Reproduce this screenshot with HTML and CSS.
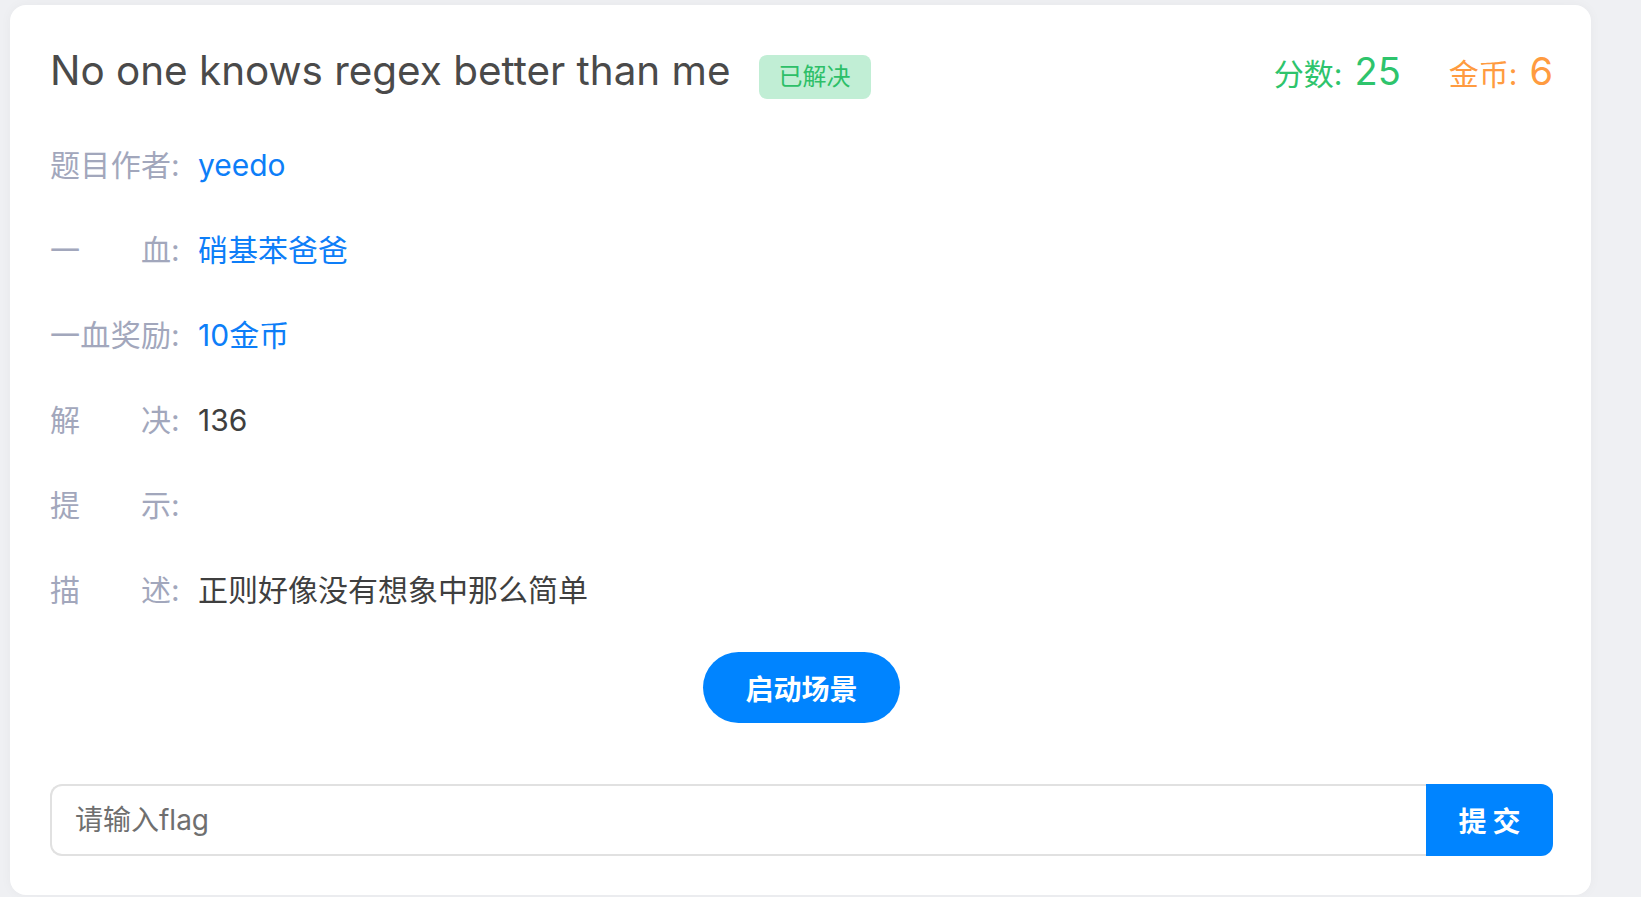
FILE: index.html
```html
<!DOCTYPE html>
<html lang="zh-CN">
<head>
<meta charset="utf-8">
<title>No one knows regex better than me</title>
<link rel="stylesheet" href="styles.css">
</head>
<body>
<div class="page">
  <div class="card">
    <div class="header">
      <div class="title-group">
        <h1 class="title">No one knows regex better than me</h1>
        <span class="badge">已解决</span>
      </div>
      <div class="stats">
        <span class="stat stat-score"><span class="stat-label">分数:</span><span class="stat-num">25</span></span>
        <span class="stat stat-coin"><span class="stat-label">金币:</span><span class="stat-num">6</span></span>
      </div>
    </div>

    <div class="rows">
      <div class="row"><span class="label"><span class="label-text">题目作者</span>:</span><span class="value link">yeedo</span></div>
      <div class="row"><span class="label"><span class="label-text">一血</span>:</span><span class="value link">硝基苯爸爸</span></div>
      <div class="row"><span class="label"><span class="label-text">一血奖励</span>:</span><span class="value link">10金币</span></div>
      <div class="row"><span class="label"><span class="label-text">解决</span>:</span><span class="value">136</span></div>
      <div class="row"><span class="label"><span class="label-text">提示</span>:</span><span class="value"></span></div>
      <div class="row"><span class="label"><span class="label-text">描述</span>:</span><span class="value">正则好像没有想象中那么简单</span></div>
    </div>

    <div class="launch-wrap">
      <button class="launch">启动场景</button>
    </div>

    <div class="submit-group">
      <input class="flag-input" type="text" placeholder="请输入flag">
      <button class="submit">提交</button>
    </div>
  </div>
</div>
</body>
</html>
```

FILE: styles.css
```css
html, body {
  margin: 0;
  padding: 0;
}
body {
  background: #eff0f3;
  font-family: Inter, "Noto Sans CJK SC", sans-serif;
  width: 1641px;
  height: 897px;
  overflow: hidden;
}
.page {
  padding: 5px 0 0 10px;
}
.card {
  box-sizing: border-box;
  width: 1581px;
  height: 890px;
  background: #ffffff;
  border-radius: 16px;
  box-shadow: 0 0 12px rgba(0, 0, 0, 0.04);
  padding: 40px 38px 38px 40px;
  display: flex;
  flex-direction: column;
}
.header {
  display: flex;
  justify-content: space-between;
  align-items: baseline;
  height: 52px;
}
.title-group {
  display: flex;
  align-items: baseline;
}
.title {
  margin: 0;
  font-size: 40.4px;
  line-height: 52px;
  font-weight: 400;
  color: #4a4a4a;
}
.badge {
  margin-left: 28px;
  background: #c1eed5;
  color: #2dbf68;
  font-size: 24px;
  line-height: 40px;
  height: 40px;
  padding: 0 20px 4px 20px;
  border-radius: 8px;
  font-family: "Noto Sans CJK SC", sans-serif;
}
.stats {
  display: flex;
  align-items: baseline;
  gap: 48px;
}
.stat {
  white-space: nowrap;
  display: flex;
  align-items: baseline;
}
.stat-label {
  font-size: 30px;
}
.stat-num {
  font-size: 38px;
  margin-left: 12px;
}
.stat-score {
  color: #2ec46c;
}
.stat-coin {
  color: #ff9b40;
}
.rows {
  margin-top: 48px;
  display: flex;
  flex-direction: column;
  gap: 45px;
}
.row {
  display: flex;
  align-items: center;
  height: 40px;
  font-size: 30px;
  line-height: 40px;
  white-space: nowrap;
}
.label {
  display: flex;
  color: #a2a7bc;
  width: 148px;
  flex: none;
}
.label-text {
  display: inline-block;
  width: 121px;
  text-align: justify;
  text-align-last: justify;
}
.value {
  color: #3f3f3f;
}
.link {
  color: #0d7ef8;
}
.launch-wrap {
  margin-top: 42px;
  display: flex;
  justify-content: center;
}
.launch {
  height: 71px;
  padding: 0 42px;
  border: none;
  border-radius: 36px;
  background: #0084ff;
  color: #ffffff;
  font-family: "Noto Sans CJK SC", sans-serif;
  font-size: 28px;
  font-weight: 700;
}
.submit-group {
  margin-top: 61px;
  display: flex;
  height: 72px;
}
.flag-input {
  flex: 1;
  box-sizing: border-box;
  height: 72px;
  border: 2px solid #e1e1e1;
  border-right: none;
  border-radius: 12px 0 0 12px;
  padding: 0 23px;
  font-family: Inter, "Noto Sans CJK SC", sans-serif;
  font-size: 28px;
  color: #333333;
  outline: none;
}
.flag-input::placeholder {
  color: #6f6f6f;
}
.submit {
  width: 127px;
  height: 72px;
  border: none;
  border-radius: 0 12px 12px 0;
  background: #0084ff;
  color: #ffffff;
  font-family: "Noto Sans CJK SC", sans-serif;
  font-size: 28px;
  font-weight: 700;
  letter-spacing: 6px;
  padding: 0 0 0 6px;
}
```
